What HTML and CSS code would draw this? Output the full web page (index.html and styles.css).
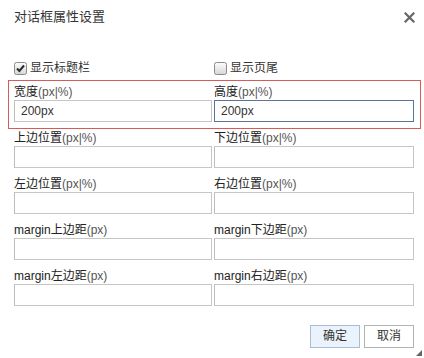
FILE: index.html
```html
<!DOCTYPE html>
<html>
<head>
<meta charset="utf-8">
<link rel="stylesheet" href="styles.css">
</head>
<body>
<div class="dialog">
  <div class="titlebar">
    <span class="title">对话框属性设置</span>
    <span class="close">
      <svg width="11" height="11" viewBox="0 0 11 11"><path d="M1.5 1.5 L9.5 9.5 M9.5 1.5 L1.5 9.5" stroke="#666" stroke-width="2.2" stroke-linecap="square"/></svg>
    </span>
  </div>
  <div class="content">
    <div class="grid checks">
      <label class="check">
        <svg class="cb" width="13" height="13" viewBox="0 0 13 13"><defs><linearGradient id="g1" x1="0" y1="0" x2="0" y2="1"><stop offset="0" stop-color="#fdfdfd"/><stop offset="1" stop-color="#d6d6d6"/></linearGradient></defs><rect x="0.5" y="0.5" width="12" height="12" rx="2" fill="url(#g1)" stroke="#8a8a8a"/><path d="M3 6.5 L5.4 9 L10 3.5" fill="none" stroke="#2b2b2b" stroke-width="2"/></svg>
        <span>显示标题栏</span>
      </label>
      <label class="check">
        <svg class="cb" width="13" height="13" viewBox="0 0 13 13"><defs><linearGradient id="g2" x1="0" y1="0" x2="0" y2="1"><stop offset="0" stop-color="#fdfdfd"/><stop offset="1" stop-color="#d6d6d6"/></linearGradient></defs><rect x="0.5" y="0.5" width="12" height="12" rx="2" fill="url(#g2)" stroke="#8a8a8a"/></svg>
        <span>显示页尾</span>
      </label>
    </div>
    <div class="grid row hl">
      <div class="field"><div class="lbl">宽度<span class="unit">(px|%)</span></div><div class="input">200px</div></div>
      <div class="field"><div class="lbl">高度<span class="unit">(px|%)</span></div><div class="input focus">200px</div></div>
    </div>
    <div class="grid row">
      <div class="field"><div class="lbl">上边位置<span class="unit">(px|%)</span></div><div class="input"></div></div>
      <div class="field"><div class="lbl">下边位置<span class="unit">(px|%)</span></div><div class="input"></div></div>
    </div>
    <div class="grid row">
      <div class="field"><div class="lbl">左边位置<span class="unit">(px|%)</span></div><div class="input"></div></div>
      <div class="field"><div class="lbl">右边位置<span class="unit">(px|%)</span></div><div class="input"></div></div>
    </div>
    <div class="grid row">
      <div class="field"><div class="lbl">margin上边距<span class="unit">(px)</span></div><div class="input"></div></div>
      <div class="field"><div class="lbl">margin下边距<span class="unit">(px)</span></div><div class="input"></div></div>
    </div>
    <div class="grid row">
      <div class="field"><div class="lbl">margin左边距<span class="unit">(px)</span></div><div class="input"></div></div>
      <div class="field"><div class="lbl">margin右边距<span class="unit">(px)</span></div><div class="input"></div></div>
    </div>
  </div>
  <div class="footer">
    <div class="btn primary">确定</div>
    <div class="btn">取消</div>
  </div>
  <svg class="grip" width="6" height="6" viewBox="0 0 6 6"><path d="M6 0 L6 6 L0 6 Z" fill="#666"/></svg>
</div>
</body>
</html>
```

FILE: styles.css
```css
html, body {
  margin: 0;
  padding: 0;
  background: #fff;
}
body {
  font-family: "Liberation Sans", "Noto Sans CJK SC", sans-serif;
  font-size: 12px;
  color: #333;
}
.dialog {
  position: relative;
  width: 424px;
  height: 358px;
  background: #fff;
}
.titlebar {
  height: 34px;
  display: flex;
  align-items: center;
  justify-content: space-between;
  padding: 0 9px 0 14px;
}
.title {
  font-size: 13px;
  color: #333;
  line-height: 34px;
}
.close {
  display: flex;
  width: 11px;
  height: 11px;
}
.content {
  padding: 26px 10px 0 14px;
}
.grid {
  display: grid;
  grid-template-columns: 200px 200px;
}
.checks {
  height: 16px;
  margin-bottom: 8px;
}
.check {
  display: flex;
  align-items: center;
  gap: 3px;
  line-height: 16px;
}
.cb {
  display: block;
}
.row {
  position: relative;
  height: 46px;
}
.hl::before {
  content: "";
  position: absolute;
  top: -4px;
  bottom: 1px;
  left: -6px;
  right: -7px;
  border: 1px solid #d65c5c;
  pointer-events: none;
}
.field {
  display: flex;
  flex-direction: column;
}
.lbl {
  height: 16px;
  line-height: 16px;
  color: #222;
  white-space: nowrap;
}
.unit {
  color: #555;
}
.input {
  box-sizing: border-box;
  height: 22px;
  border: 1px solid #c6c6c6;
  border-left-color: #bdbdbd;
  padding-left: 6px;
  line-height: 20px;
  color: #333;
  width: 198px;
}
.field + .field .input {
  width: 200px;
}
.input.focus {
  border-color: #5b7399;
}
.footer {
  display: flex;
  justify-content: flex-end;
  gap: 4px;
  padding: 11px 10px 0 0;
}
.btn {
  box-sizing: border-box;
  width: 50px;
  height: 23px;
  line-height: 21px;
  text-align: center;
  border: 1px solid #b3b3b3;
  background: #fff;
  color: #333;
}
.btn.primary {
  background: #eaf2fb;
  border-color: #a8bdd6;
}
.grip {
  position: absolute;
  right: 2px;
  bottom: 2px;
}
```
